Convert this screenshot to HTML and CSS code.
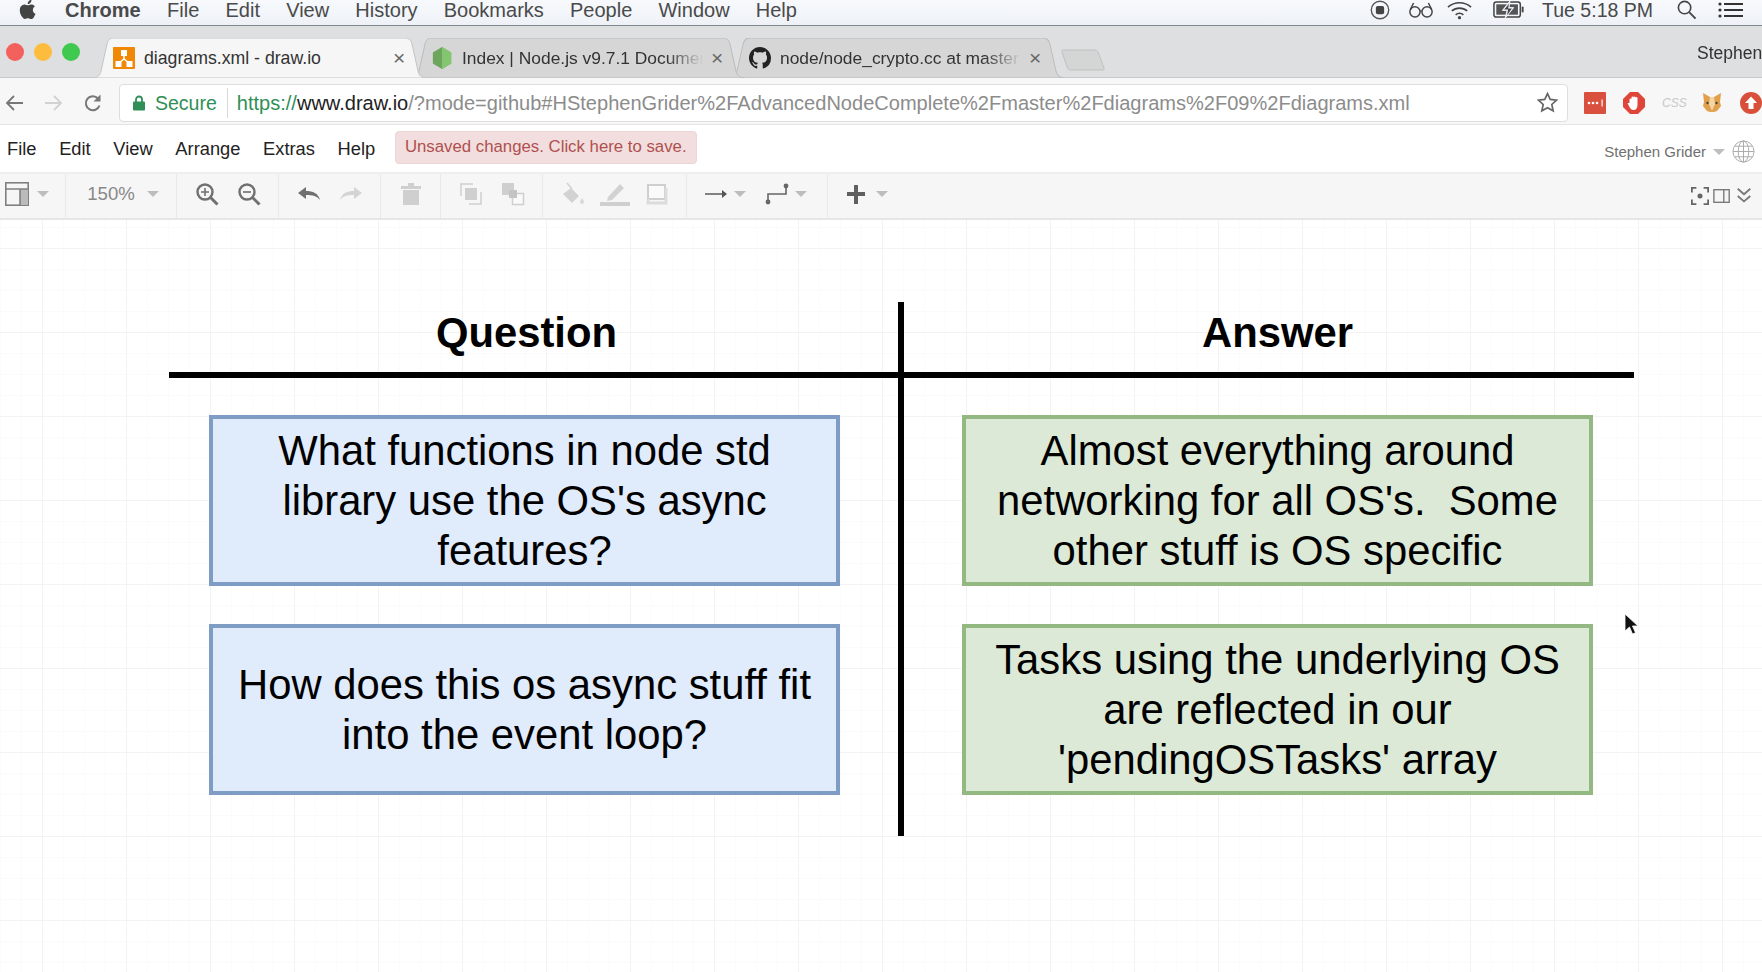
FILE: index.html
```html
<!DOCTYPE html>
<html lang="en">
<head>
    <meta charset="UTF-8">
    <title>diagrams.xml - draw.io</title>
    <link rel="stylesheet" href="styles.css">
</head>
<body>
<div class="screen">

<!-- mac menu bar -->
<header class="menubar">
    <svg class="apple" viewBox="0 0 20 24"><path d="M14.6 12.6c0-2.6 2.1-3.8 2.2-3.9-1.2-1.800-3.100-2-3.700-2-1.600-.2-3.100.9-3.900.9-.8 0-2-.9-3.300-.9-1.700 0-3.300 1-4.200 2.500-1.800 3.100-.5 7.700 1.300 10.200.9 1.200 1.900 2.600 3.200 2.600 1.300-.1 1.800-.8 3.300-.8 1.500 0 2 .8 3.300.8 1.400 0 2.300-1.200 3.100-2.500 1-1.400 1.400-2.800 1.400-2.900-.1 0-2.700-1-2.700-4zM12.100 4.900c.7-.9 1.200-2 1-3.200-1 0-2.200.7-2.900 1.500-.6.7-1.200 1.900-1 3 1.100.1 2.200-.5 2.900-1.300z"/></svg>
    <span class="menubar-item app-name">Chrome</span>
    <span class="menubar-item">File</span>
    <span class="menubar-item">Edit</span>
    <span class="menubar-item">View</span>
    <span class="menubar-item">History</span>
    <span class="menubar-item">Bookmarks</span>
    <span class="menubar-item">People</span>
    <span class="menubar-item">Window</span>
    <span class="menubar-item">Help</span>
    <div class="menubar-status">
        <svg class="status-icon" viewBox="0 0 24 24"><circle cx="12" cy="12" r="9.500" fill="none" stroke="#555" stroke-width="1.500"/><rect x="7.500" y="7.500" width="9" height="9" rx="2" fill="#444"/></svg>
        <svg class="status-glasses" viewBox="0 0 28 20"><g fill="none" stroke="#444" stroke-width="1.600"><circle cx="7.500" cy="12.500" r="5.500"/><circle cx="20.500" cy="12.500" r="5.500"/><path d="M13 12c.6-.7 1.400-.7 2 0M2.500 10 6 3M25.500 10 22 3"/></g></svg>
        <svg class="status-wifi" viewBox="0 0 28 20"><g fill="none" stroke="#444" stroke-width="1.700"><path d="M2 7c7-6 17-6 24 0M6 11c4.500-4 11.500-4 16 0M10 15c2.300-2 5.700-2 8 0"/></g><circle cx="14" cy="18" r="1.700" fill="#444"/></svg>
        <svg class="status-battery" viewBox="0 0 34 20"><rect x="1" y="2" width="28" height="16" rx="2.500" fill="none" stroke="#444" stroke-width="1.600"/><rect x="3.500" y="4.500" width="23" height="11" fill="#555"/><path d="M18 1 10 11h5l-2 8 9-11h-5z" fill="#f0f3f7" stroke="#f0f3f7"/><path d="M17 4 12 10h4l-1 6 5-7h-4z" fill="#444"/><rect x="30.500" y="7" width="2" height="6" fill="#444"/></svg>
        <span class="status-time">Tue 5:18 PM</span>
        <svg class="status-search" viewBox="0 0 22 22"><circle cx="9" cy="9" r="6.500" fill="none" stroke="#444" stroke-width="1.700"/><path d="m14 14 6.500 6.500" stroke="#444" stroke-width="2"/></svg>
        <svg class="status-list" viewBox="0 0 26 18"><g fill="#333"><circle cx="2" cy="3" r="1.600"/><circle cx="2" cy="9" r="1.600"/><circle cx="2" cy="15" r="1.600"/><rect x="6" y="2" width="19" height="2"/><rect x="6" y="8" width="19" height="2"/><rect x="6" y="14" width="19" height="2"/></g></svg>
    </div>
</header>

<!-- tab strip -->
<div class="tabstrip">
    <div class="traffic">
        <span class="light light-red"></span>
        <span class="light light-yellow"></span>
        <span class="light light-green"></span>
    </div>
    <div class="tab tab-active">
        <svg class="tab-shape" viewBox="0 0 335 40" preserveAspectRatio="none"><path d="M0 40C6 40 8 37 9 33L15 6C16 2 18 0 22 0H313C317 0 319 2 320 6L326 33C327 37 329 40 335 40Z" fill="#f6f6f6" stroke="#c4c4c4"/></svg>
        <svg class="favicon" viewBox="0 0 22 22"><rect width="22" height="22" rx="1" fill="#f08705"/><path d="M11 8v4M11 12l-5 4M11 12l5 4" stroke="#fff" stroke-width="1.600" fill="none"/><rect x="8" y="3" width="6" height="6" fill="#fff"/><rect x="2.500" y="14" width="6" height="6" fill="#fff"/><rect x="13.500" y="14" width="6" height="6" fill="#fff"/></svg>
        <span class="tab-title">diagrams.xml - draw.io</span>
        <span class="tab-close">×</span>
    </div>
    <div class="tab tab-second">
        <svg class="tab-shape" viewBox="0 0 335 40" preserveAspectRatio="none"><path d="M0 40C6 40 8 37 9 33L15 6C16 2 18 0 22 0H313C317 0 319 2 320 6L326 33C327 37 329 40 335 40Z" fill="#d6d6d6" stroke="#bcbcbc"/></svg>
        <svg class="favicon" viewBox="0 0 22 24"><path d="M11 0 21 6v12l-10 6-10-6V6z" fill="#6da55f"/><path d="M11 0 21 6v12l-10 6z" fill="#83c66f"/></svg>
        <span class="tab-title tab-title-fade">Index | Node.js v9.7.1 Documen</span>
        <span class="tab-close">×</span>
    </div>
    <div class="tab tab-third">
        <svg class="tab-shape" viewBox="0 0 335 40" preserveAspectRatio="none"><path d="M0 40C6 40 8 37 9 33L15 6C16 2 18 0 22 0H313C317 0 319 2 320 6L326 33C327 37 329 40 335 40Z" fill="#d6d6d6" stroke="#bcbcbc"/></svg>
        <svg class="favicon" viewBox="0 0 16 16"><path fill="#222" d="M8 0C3.580 0 0 3.580 0 8c0 3.540 2.290 6.530 5.470 7.590.4.070.55-.17.55-.38 0-.19-.01-.82-.01-1.490-2.010.37-2.530-.49-2.690-.94-.09-.23-.48-.94-.82-1.130-.28-.15-.68-.52-.01-.53.63-.01 1.080.58 1.230.82.72 1.210 1.870.87 2.330.66.07-.52.28-.87.51-1.070-1.780-.2-3.640-.89-3.640-3.950 0-.87.31-1.590.82-2.150-.08-.2-.36-1.020.08-2.120 0 0 .67-.21 2.200.82.64-.18 1.320-.27 2-.27.68 0 1.360.09 2 .27 1.530-1.040 2.200-.82 2.200-.82.44 1.100.16 1.920.08 2.120.51.56.82 1.270.82 2.150 0 3.070-1.870 3.750-3.650 3.950.29.25.54.73.54 1.480 0 1.070-.01 1.930-.01 2.200 0 .21.15.46.55.38A8.013 8.013 0 0 0 16 8c0-4.420-3.580-8-8-8z"/></svg>
        <span class="tab-title tab-title-fade">node/node_crypto.cc at master</span>
        <span class="tab-close">×</span>
    </div>
    <svg class="newtab" viewBox="0 0 44 22"><path d="M2 1H33C35 1 36 2 37 3L43 19C43.500 20.500 43 21 41 21H10C8 21 7 20 6.500 19L1 3C.5 2 1 1 2 1Z" fill="#d4d5d5" stroke="#bfc0c0"/></svg>
    <span class="profile-name">Stephen</span>
</div>

<!-- address bar -->
<div class="addressbar">
    <div class="nav-buttons">
        <svg class="nav-icon" viewBox="0 0 20 20"><path d="M18 10H3M9 3l-7 7 7 7" fill="none" stroke="#777" stroke-width="1.800"/></svg>
        <svg class="nav-icon" viewBox="0 0 20 20"><path d="M2 10h15M11 3l7 7-7 7" fill="none" stroke="#d2d2d2" stroke-width="1.800"/></svg>
        <svg class="nav-icon nav-reload" viewBox="0 0 20 20"><path d="M16.500 12.500A7 7 0 1 1 15 5.500" fill="none" stroke="#777" stroke-width="2"/><path d="M17.500 1.500v7h-7z" fill="#777"/></svg>
    </div>
    <div class="omnibox">
        <svg class="lock" viewBox="0 0 12 16"><path d="M3 7V4.500a3 3 0 0 1 6 0V7" fill="none" stroke="#2f8f57" stroke-width="1.800"/><rect y="6.500" width="12" height="9" rx="1" fill="#2f8f57"/></svg>
        <span class="secure">Secure</span>
        <span class="url"><span class="url-scheme">https://</span><span class="url-host">www.draw.io</span>/?mode=github#HStephenGrider%2FAdvancedNodeComplete%2Fmaster%2Fdiagrams%2F09%2Fdiagrams.xml</span>
        <svg class="star" viewBox="0 0 20 20"><path d="m10 1.500 2.600 5.600 6 .7-4.500 4.100 1.300 6L10 14.900l-5.400 3 1.300-6L1.400 7.800l6-.7z" fill="none" stroke="#666" stroke-width="1.600"/></svg>
    </div>
    <div class="extensions">
        <svg class="ext-icon" viewBox="0 0 22 22"><rect width="22" height="22" rx="1" fill="#d9503f"/><g fill="#fff"><circle cx="5" cy="11" r="1.300"/><circle cx="9" cy="11" r="1.300"/><circle cx="13" cy="11" r="1.300"/><rect x="17.500" y="7.500" width="1.200" height="7"/></g></svg>
        <svg class="ext-icon" viewBox="0 0 22 22"><path d="M7 0h8l7 7v8l-7 7H7l-7-7V7z" fill="#e0453a"/><path d="M6.500 11V7.500a1 1 0 0 1 2 0V5.500a1 1 0 0 1 2 0 1 1 0 0 1 2 0V6a1 1 0 0 1 2 0v7c0 3-1.500 5-4 5-2.500 0-3.500-1.500-5-5l-1-2z" fill="#fff"/></svg>
        <span class="ext-css">CSS</span>
        <svg class="ext-icon" viewBox="0 0 22 22"><path d="M2 1 9 5h4l7-4-1 9 1 4-4 5-3 1H9l-3-1-4-5 1-4z" fill="#e2a04c"/><path d="M9 5h4l1 7-3 7-3-7z" fill="#f3d6a8"/><circle cx="6.500" cy="11" r="1.200" fill="#443"/><circle cx="15.500" cy="11" r="1.200" fill="#443"/></svg>
        <svg class="ext-icon" viewBox="0 0 22 22"><circle cx="11" cy="11" r="11" fill="#d9503a"/><path d="M11 4.500 17 11h-3.500v6h-5v-6H5z" fill="#fff"/></svg>
    </div>
</div>

<!-- draw.io menu row -->
<nav class="appmenu">
    <span class="appmenu-item">File</span>
    <span class="appmenu-item">Edit</span>
    <span class="appmenu-item">View</span>
    <span class="appmenu-item">Arrange</span>
    <span class="appmenu-item">Extras</span>
    <span class="appmenu-item">Help</span>
    <span class="unsaved">Unsaved changes. Click here to save.</span>
    <div class="account">
        <span>Stephen Grider</span>
        <span class="caret"></span>
        <svg class="globe" viewBox="0 0 24 24"><g fill="none" stroke="#aaa" stroke-width="1"><circle cx="12" cy="12" r="11"/><ellipse cx="12" cy="12" rx="5.500" ry="11"/><path d="M12 1v22M1 12h22M2.500 6.500h19M2.500 17.500h19"/></g></svg>
    </div>
</nav>

<!-- draw.io toolbar -->
<div class="toolbar">
    <div class="tool-group group-panel">
        <svg class="tool" viewBox="0 0 24 24"><rect x=".8" y=".8" width="22.400" height="22.400" fill="none" stroke="#808080" stroke-width="1.600"/><rect x="15" y="7" width="8" height="16" fill="#bbb"/><path d="M0 7h24M15 7v16" stroke="#808080" stroke-width="1.600"/></svg>
        <span class="caret"></span>
    </div>
    <div class="tool-group group-zoom">
        <span class="zoom-value">150%</span>
        <span class="caret"></span>
    </div>
    <div class="tool-group group-gap">
        <svg class="tool" viewBox="0 0 24 24"><circle cx="10" cy="10" r="7.500" fill="none" stroke="#707070" stroke-width="2.400"/><path d="m15.500 15.500 7 7" stroke="#707070" stroke-width="3"/><path d="M6 10h8M10 6v8" stroke="#707070" stroke-width="1.600"/></svg>
        <svg class="tool" viewBox="0 0 24 24"><circle cx="10" cy="10" r="7.500" fill="none" stroke="#707070" stroke-width="2.400"/><path d="m15.500 15.500 7 7" stroke="#707070" stroke-width="3"/><path d="M6 10h8" stroke="#707070" stroke-width="1.600"/></svg>
    </div>
    <div class="tool-group group-gap">
        <svg class="tool" viewBox="0 0 24 24"><path d="M1 11 9 5v4c7 0 12 2 14 9-3-4-7-5-14-5v4z" fill="#707070"/></svg>
        <svg class="tool" viewBox="0 0 24 24"><path d="M23 11 15 5v4C8 9 3 11 1 18c3-4 7-5 14-5v4z" fill="#d4d4d4"/></svg>
    </div>
    <div class="tool-group group-trash">
        <svg class="tool" viewBox="0 0 24 24"><path d="M2 4h20v3H2zM9 1h6v3H9zM4 8h16v15H4z" fill="#cfcfcf"/></svg>
    </div>
    <div class="tool-group group-gap">
        <svg class="tool" viewBox="0 0 24 24"><path d="M2 14V2h12M10 22h12V10" fill="none" stroke="#d0d0d0" stroke-width="1.500"/><rect x="6" y="6" width="12" height="12" fill="#cfcfcf"/></svg>
        <svg class="tool" viewBox="0 0 24 24"><rect x="1.500" y="1.500" width="11" height="11" fill="#cfcfcf" stroke="#cfcfcf"/><rect x="11.500" y="11.500" width="11" height="11" fill="#fafafa" stroke="#cfcfcf" stroke-width="1.500"/><rect x="8" y="8" width="8" height="8" fill="#c4c4c4"/></svg>
    </div>
    <div class="tool-group group-gap group-style">
        <svg class="tool" viewBox="0 0 24 24"><path d="m10 6 8 8-7 7-9-9z" fill="#d2d2d2"/><path d="M6 1l5 6" stroke="#d2d2d2" stroke-width="1.500"/><path d="M21 16c1.500 2.500 2 3 2 4a2 2 0 0 1-4 0c0-1 .5-1.500 2-4z" fill="#d8d8d8"/></svg>
        <svg class="tool tool-wide" viewBox="0 0 30 24"><path d="M8 15 20 2l4 4-12 12-5 1z" fill="#d2d2d2"/><rect y="20" width="30" height="4" fill="#cfcfcf"/></svg>
        <svg class="tool" viewBox="0 0 24 24"><path d="M3 3h17v14H3z" fill="#fafafa" stroke="#cfcfcf" stroke-width="2"/><path d="M3 17v4h18V6" fill="none" stroke="#dcdcdc" stroke-width="3"/></svg>
    </div>
    <div class="tool-group group-connect">
        <svg class="tool" viewBox="0 0 24 24"><path d="M1 12h18" stroke="#666" stroke-width="1.600"/><path d="m18 8 5 4-5 4z" fill="#555"/></svg>
        <span class="caret"></span>
        <svg class="tool tool-route" viewBox="0 0 24 24"><path d="M3 20v-8h18V4" fill="none" stroke="#666" stroke-width="1.600"/><circle cx="3" cy="20" r="2.400" fill="#666"/><circle cx="21" cy="4" r="2.400" fill="#666"/></svg>
        <span class="caret"></span>
    </div>
    <div class="tool-group group-insert">
        <svg class="tool" viewBox="0 0 24 24"><path d="M12 3v19M3 12h18" stroke="#606060" stroke-width="4"/></svg>
        <span class="caret"></span>
    </div>
    <div class="toolbar-right">
        <svg class="tool tool-small" viewBox="0 0 20 20"><path d="M1 6V1h5M14 1h5v5M19 14v5h-5M6 19H1v-5" fill="none" stroke="#666" stroke-width="2"/><circle cx="10" cy="10" r="2.800" fill="#666"/></svg>
        <svg class="tool tool-small" viewBox="0 0 20 20"><rect x="1" y="3" width="17" height="14" fill="none" stroke="#777" stroke-width="1.500"/><path d="M12 3v14" stroke="#777" stroke-width="1.500"/></svg>
        <svg class="tool tool-small" viewBox="0 0 20 20"><path d="m3 2 7 6 7-6M3 10l7 6 7-6" fill="none" stroke="#777" stroke-width="2"/></svg>
    </div>
</div>

<!-- diagram -->
<main class="canvas">
    <h2 class="heading heading-question">Question</h2>
    <h2 class="heading heading-answer">Answer</h2>
    <div class="rule-h"></div>
    <div class="rule-v"></div>
    <div class="node node-blue node-top-left">What functions in node std library use the OS's async features?</div>
    <div class="node node-blue node-bottom-left">How does this os async stuff fit into the event loop?</div>
    <div class="node node-green node-top-right">Almost everything around networking for all OS's.&nbsp; Some other stuff is OS specific</div>
    <div class="node node-green node-bottom-right">Tasks using the underlying OS are reflected in our 'pendingOSTasks' array</div>
    <svg class="pointer" viewBox="0 0 16 24"><path d="M1 1v17l4.500-4 3 7 3-1.300-3-6.700H14z" fill="#111" stroke="#fff" stroke-width=".8"/></svg>
</main>

</div>
</body>
</html>
```

FILE: styles.css
```css
* {
    box-sizing: border-box;
}

html, body {
    margin: 0;
    padding: 0;
    height: 100%;
    overflow: hidden;
}

body {
    font-family: "Liberation Sans", Arial, sans-serif;
    background: #fff;
}

.screen {
    display: flex;
    flex-direction: column;
    height: 972px;
    filter: blur(0.5px);
}

/* mac menu bar */
.menubar {
    display: flex;
    align-items: center;
    flex: 0 0 26px;
    min-height: 0;
    overflow: hidden;
    padding: 0 0 6px 19px;
    background: linear-gradient(#f7f9fc, #eef2f7);
    border-bottom: 1px solid #80868e;
    font-size: 20px;
    color: #4a4a4a;
}

.apple {
    width: 19px;
    height: 23px;
    margin-right: 27px;
    fill: #444;
}

.menubar-item {
    margin-right: 26.200px;
    line-height: 20px;
}

.app-name {
    font-weight: bold;
    margin-right: 26.500px;
}

.menubar-status {
    display: flex;
    align-items: center;
    margin-left: auto;
}

.status-icon {
    width: 22px;
    height: 22px;
    margin-right: 17px;
}

.status-glasses {
    width: 26px;
    height: 19px;
    margin-right: 12px;
}

.status-wifi {
    width: 27px;
    height: 20px;
    margin-right: 20px;
}

.status-battery {
    width: 32px;
    height: 19px;
    margin-right: 17px;
}

.status-time {
    font-size: 19.500px;
    line-height: 20px;
    margin-right: 23px;
}

.status-search {
    width: 21px;
    height: 21px;
    margin-right: 21px;
}

.status-list {
    width: 26px;
    height: 18px;
    margin-right: 18px;
}

/* tabs */
.tabstrip {
    position: relative;
    display: flex;
    align-items: flex-end;
    flex: 0 0 52px;
    background: #dedfe0;
    border-bottom: 1px solid #c8c8c8;
}

.traffic {
    display: flex;
    align-self: center;
    gap: 10px;
    width: 92px;
    padding: 0 0 0 6px;
}

.light {
    width: 18px;
    height: 18px;
    border-radius: 50%;
}

.light-red {
    background: #f4615c;
}

.light-yellow {
    background: #fcbd3f;
}

.light-green {
    background: #3fc94f;
}

.tab {
    position: relative;
    display: flex;
    align-items: center;
    width: 335px;
    height: 40px;
    margin-bottom: -1px;
    padding: 0 22px 0 21px;
    font-size: 17.700px;
    color: #333;
}

.tab-active {
    z-index: 3;
}

.tab-second {
    z-index: 2;
    margin-left: -17px;
}

.tab-third {
    z-index: 1;
    width: 337px;
    margin-left: -17px;
    padding-right: 24px;
}

.tab-shape {
    position: absolute;
    left: 0;
    top: 0;
    width: 100%;
    height: 100%;
}

.favicon {
    position: relative;
    flex: none;
    width: 22px;
    height: 22px;
    margin-right: 9px;
}

.tab-title {
    position: relative;
    flex: 1;
    overflow: hidden;
    white-space: nowrap;
}

.tab-title-fade {
    font-size: 17.400px;
    -webkit-mask-image: linear-gradient(to right, #000 82%, transparent 97%);
    mask-image: linear-gradient(to right, #000 82%, transparent 97%);
}

.tab-close {
    position: relative;
    flex: none;
    width: 12px;
    font-size: 21px;
    line-height: 20px;
    text-align: center;
    color: #666;
}

.newtab {
    position: relative;
    width: 44px;
    height: 22px;
    margin: 0 0 6px -4px;
}

.profile-name {
    position: absolute;
    left: 1697px;
    top: 17px;
    font-size: 17.500px;
    color: #333;
}

/* address bar */
.addressbar {
    display: flex;
    align-items: center;
    flex: 0 0 47px;
    padding-top: 3px;
    background: #f7f7f7;
    border-bottom: 1px solid #e4e4e4;
}

.nav-buttons {
    display: flex;
    align-items: center;
    gap: 18px;
    width: 119px;
    padding-left: 5px;
}

.nav-icon {
    width: 20px;
    height: 20px;
}

.nav-reload {
    margin-left: 2px;
}

.omnibox {
    display: flex;
    align-items: center;
    width: 1449px;
    height: 38px;
    padding: 0 9px 0 13px;
    background: #fff;
    border: 1px solid #dedede;
    border-radius: 4px;
    font-size: 19.500px;
    white-space: nowrap;
}

.lock {
    width: 12px;
    height: 16px;
    margin-right: 10px;
}

.secure {
    padding-right: 10px;
    margin-right: 9px;
    border-right: 1px solid #d8d8d8;
    line-height: 30px;
    color: #2f8f57;
}

.url {
    flex: 1;
    padding-top: 2px;
    font-size: 20.050px;
    color: #8c8c8c;
}

.url-scheme {
    color: #2f8f57;
}

.url-host {
    color: #222;
}

.star {
    width: 21px;
    height: 21px;
}

.extensions {
    display: flex;
    align-items: center;
    gap: 17px;
    padding-left: 16px;
}

.ext-icon {
    flex: none;
    width: 22px;
    height: 22px;
}

.ext-css {
    width: 22px;
    font-size: 12px;
    font-style: italic;
    color: #c8c8c8;
}

/* app menu */
.appmenu {
    display: flex;
    align-items: center;
    flex: 0 0 47px;
    padding-left: 7px;
    background: #fff;
    font-size: 18.300px;
    color: #222;
}

.appmenu-item {
    margin-right: 22.700px;
}

.unsaved {
    height: 33px;
    margin: -2px 0 0 -3px;
    padding: 0 9px;
    background: #f2dede;
    border: 1px solid #ebd5d5;
    border-radius: 4px;
    font-size: 16.800px;
    line-height: 30px;
    color: #b0504e;
}

.account {
    display: flex;
    align-items: center;
    gap: 7px;
    margin-left: auto;
    padding: 6px 7px 0 0;
    font-size: 15px;
    color: #707070;
}

.globe {
    width: 23px;
    height: 23px;
}

.caret {
    flex: none;
    width: 0;
    height: 0;
    border-left: 6px solid transparent;
    border-right: 6px solid transparent;
    border-top: 6px solid #bdbdbd;
}

/* app toolbar */
.toolbar {
    display: flex;
    flex: 0 0 48px;
    background: #f6f6f6;
    border-top: 2px solid #eeeeee;
    border-bottom: 2px solid #e6e6e6;
}

.tool-group {
    display: flex;
    align-items: center;
    justify-content: center;
    padding-bottom: 5px;
    border-right: 1px solid #e9e9e9;
}

.tool {
    flex: none;
    width: 24px;
    height: 24px;
}

.tool-wide {
    width: 30px;
}

.tool-small {
    width: 18px;
    height: 18px;
}

.group-panel {
    justify-content: flex-start;
    gap: 8px;
    width: 66px;
    padding-left: 5px;
}

.group-zoom {
    gap: 12px;
    width: 111px;
    padding-left: 4px;
}

.zoom-value {
    font-size: 18.600px;
    color: #888;
}

.group-gap {
    gap: 18px;
    width: 102px;
}

.group-trash {
    width: 60px;
}

.group-style {
    gap: 15px;
    width: 144px;
}

.group-connect {
    gap: 6px;
    width: 141px;
    padding-right: 3px;
}

.tool-route {
    margin-left: 13px;
}

.group-insert {
    gap: 8px;
    padding-left: 16px;
    border-right: 0;
}

.toolbar-right {
    display: flex;
    align-items: center;
    gap: 4px;
    margin-left: auto;
    padding: 0 9px 0 0;
}

/* diagram canvas */
.canvas {
    position: relative;
    flex: 1;
    background-color: #fff;
    background-image:
        linear-gradient(#f3f3f3 1px, transparent 1px),
        linear-gradient(90deg, #f3f3f3 1px, transparent 1px),
        linear-gradient(#fbfbfb 1px, transparent 1px),
        linear-gradient(90deg, #fbfbfb 1px, transparent 1px);
    background-size: 84px 84px, 84px 84px, 21px 21px, 21px 21px;
    background-position: 0 28px, 42px 0, 0 7px, 0 0;
}

.heading {
    position: absolute;
    top: 80px;
    width: 631px;
    margin: 0;
    font-size: 41.800px;
    line-height: 66px;
    text-align: center;
    color: #000;
}

.heading-question {
    left: 211px;
}

.heading-answer {
    left: 962px;
}

.rule-h {
    position: absolute;
    left: 169px;
    top: 152px;
    width: 1465px;
    height: 6px;
    background: #000;
}

.rule-v {
    position: absolute;
    left: 898px;
    top: 82px;
    width: 6px;
    height: 534px;
    background: #000;
}

.node {
    position: absolute;
    display: flex;
    align-items: center;
    justify-content: center;
    width: 631px;
    height: 171px;
    padding: 0 20px;
    border: 4.500px solid;
    font-size: 41.800px;
    line-height: 50px;
    text-align: center;
    color: #000;
}

.node-blue {
    background: #e0ebfb;
    border-color: #7f9cc5;
}

.node-green {
    background: #dce9d6;
    border-color: #94b882;
}

.node-top-left {
    left: 209px;
    top: 195px;
}

.node-bottom-left {
    left: 209px;
    top: 404px;
}

.node-top-right {
    left: 962px;
    top: 195px;
}

.node-bottom-right {
    left: 962px;
    top: 404px;
}

.pointer {
    position: absolute;
    left: 1624px;
    top: 393px;
    width: 16px;
    height: 24px;
}
```
